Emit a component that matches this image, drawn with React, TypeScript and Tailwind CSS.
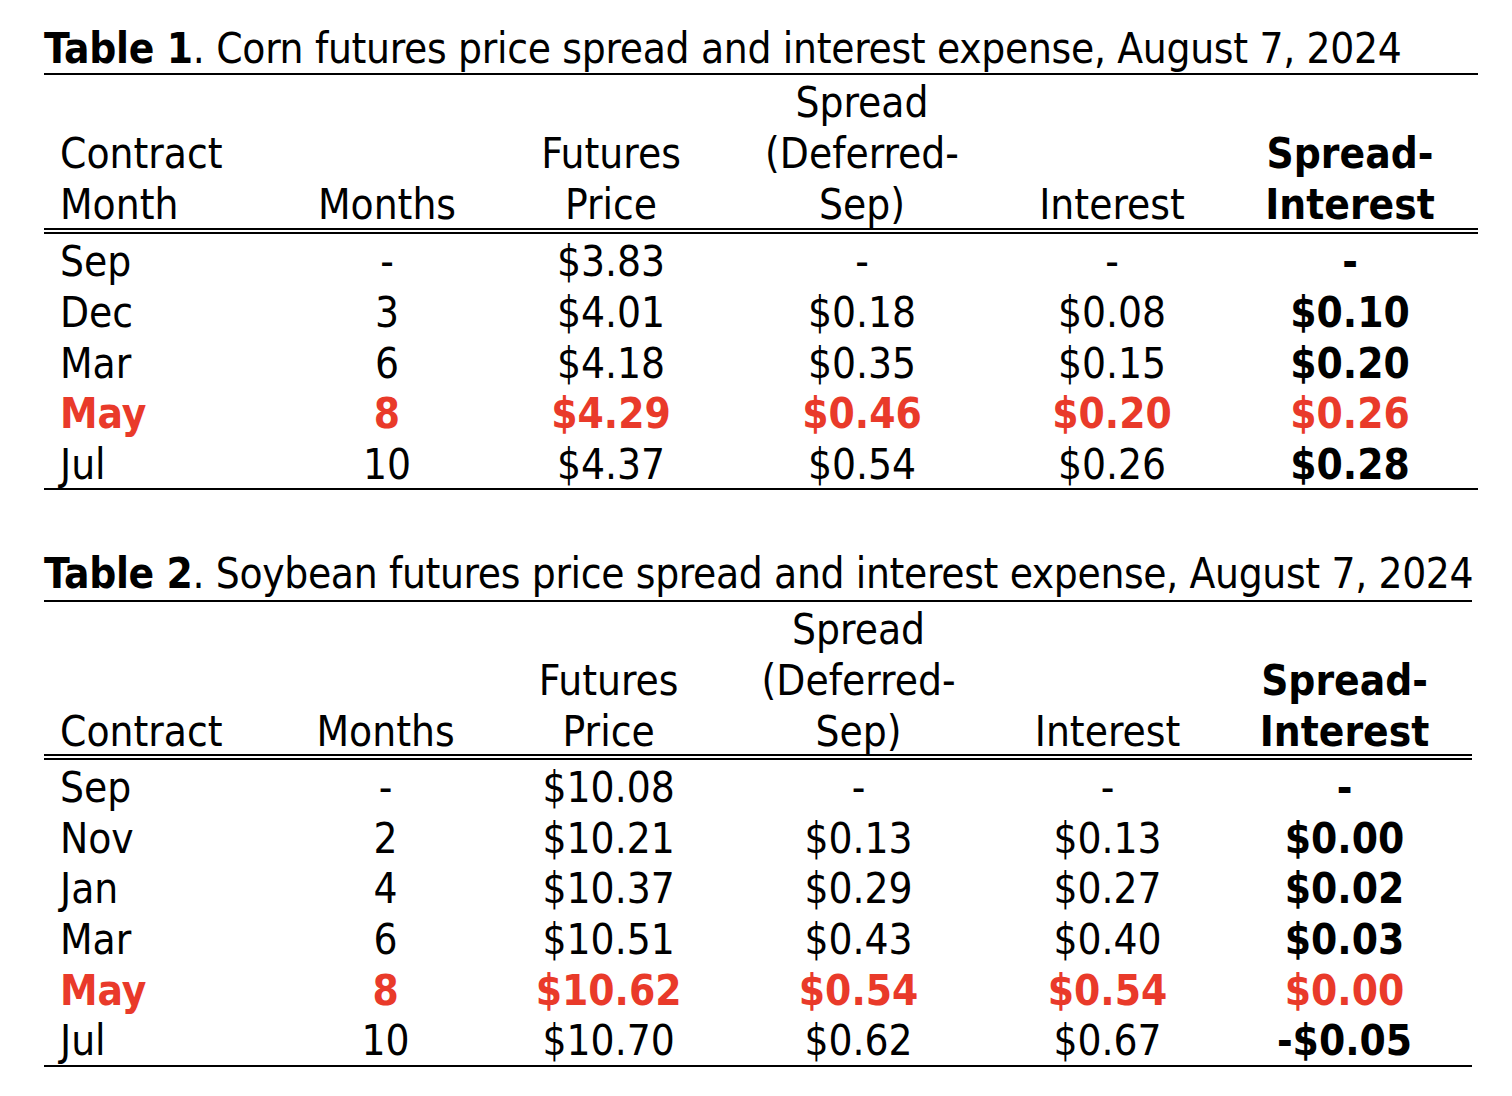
import React from "react";

type Row = { cells: string[]; red?: boolean };

const rows1: Row[] = [
  { cells: ["Sep", "-", "$3.83", "-", "-", "-"] },
  { cells: ["Dec", "3", "$4.01", "$0.18", "$0.08", "$0.10"] },
  { cells: ["Mar", "6", "$4.18", "$0.35", "$0.15", "$0.20"] },
  { cells: ["May", "8", "$4.29", "$0.46", "$0.20", "$0.26"], red: true },
  { cells: ["Jul", "10", "$4.37", "$0.54", "$0.26", "$0.28"] },
];

const rows2: Row[] = [
  { cells: ["Sep", "-", "$10.08", "-", "-", "-"] },
  { cells: ["Nov", "2", "$10.21", "$0.13", "$0.13", "$0.00"] },
  { cells: ["Jan", "4", "$10.37", "$0.29", "$0.27", "$0.02"] },
  { cells: ["Mar", "6", "$10.51", "$0.43", "$0.40", "$0.03"] },
  { cells: ["May", "8", "$10.62", "$0.54", "$0.54", "$0.00"], red: true },
  { cells: ["Jul", "10", "$10.70", "$0.62", "$0.67", "-$0.05"] },
];

const GRID = "grid grid-cols-[246fr_194fr_254fr_248fr_252fr_224fr_16fr]";

function Header({ first, h }: { first: string[]; h: string }) {
  const cols: string[][] = [
    first,
    ["Months"],
    ["Futures", "Price"],
    ["Spread", "(Deferred-", "Sep)"],
    ["Interest"],
    ["Spread-", "Interest"],
  ];
  return (
    <div className={`${GRID} ${h} border-b-[6px] border-double border-black`}>
      {cols.map((lines, i) => (
        <div
          key={i}
          className={`flex flex-col justify-end ${i === 0 ? "items-start pl-[16px]" : "items-center"} ${
            i === 5 ? "font-bold" : ""
          }`}
        >
          {lines.map((l, j) => (
            <div key={j} className="h-[51px] pt-[4px] leading-[47px] whitespace-nowrap">
              {l}
            </div>
          ))}
        </div>
      ))}
      <div />
    </div>
  );
}

function Body({ rows, rowH, pt }: { rows: Row[]; rowH: string; pt: string }) {
  return (
    <div>
      {rows.map((r, i) => (
        <div key={i} className={`${GRID} ${rowH} ${r.red ? "text-[#e93a2a] font-bold" : ""}`}>
          {r.cells.map((c, j) => (
            <div
              key={j}
              className={`${pt} leading-[47px] whitespace-nowrap ${
                j === 0 ? "text-left pl-[16px]" : "text-center"
              } ${j === 5 ? "font-bold" : ""}`}
            >
              {c}
            </div>
          ))}
          <div />
        </div>
      ))}
    </div>
  );
}

export default function App() {
  return (
    <div className="min-h-[1096px] w-[1512px] bg-white text-black text-[42px] font-[family-name:'DejaVu_Sans_Condensed','DejaVu_Sans',sans-serif] pt-[21px] pl-[44px]">
      {/* Table 1 */}
      <div className="w-[1434px]">
        <div className="h-[54px] pt-[4px] leading-[47px] whitespace-nowrap tracking-[-0.3px] border-b-2 border-black">
          <span className="font-bold">Table 1</span>. Corn futures price spread and interest expense, August 7, 2024
        </div>
        <Header first={["Contract", "Month"]} h="h-[159px]" />
        <div className="border-b-2 border-black">
          <Body rows={rows1} rowH="h-[50.8px]" pt="pt-[4px]" />
        </div>
      </div>

      {/* Table 2 */}
      <div className="w-[1428px] mt-[56px]">
        <div className="h-[56px] pt-[4px] leading-[47px] whitespace-nowrap tracking-[-0.34px] border-b-2 border-black">
          <span className="font-bold">Table 2</span>. Soybean futures price spread and interest expense, August 7, 2024
        </div>
        <Header first={["Contract"]} h="h-[158px]" />
        <div className="border-b-2 border-black pb-[1px]">
          <Body rows={rows2} rowH="h-[50.7px]" pt="pt-[4px]" />
        </div>
      </div>
    </div>
  );
}
